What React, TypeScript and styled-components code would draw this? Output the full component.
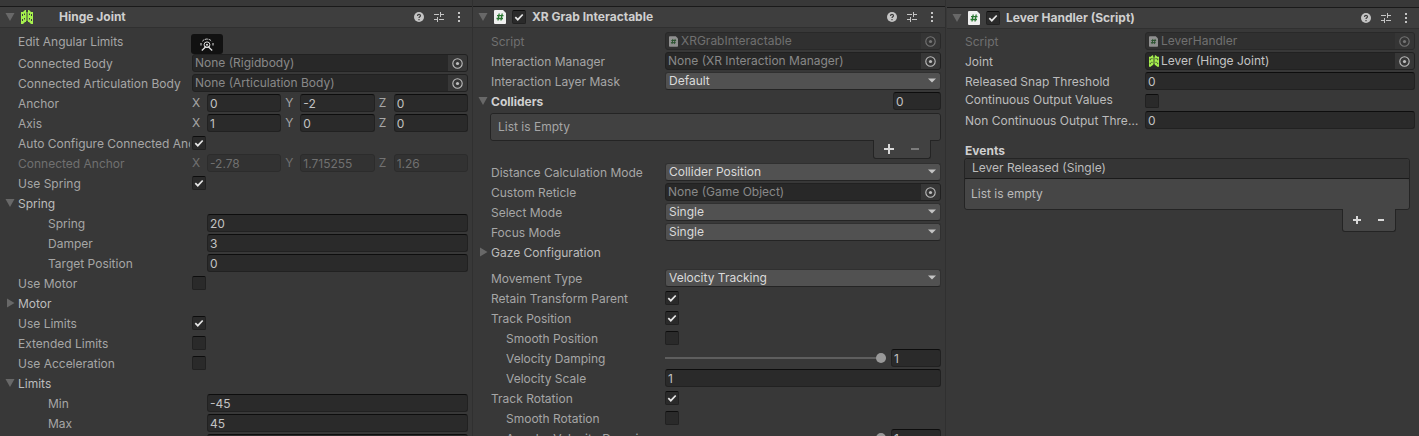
import React, { useId, useState } from "react";
import styled, { createGlobalStyle, css } from "styled-components";

const c = {
  window: "#383838",
  header: "#3e3e3e",
  line: "#1a1a1a",
  softLine: "#303030",
  field: "#2a2a2a",
  fieldEdge: "#212121",
  fieldTop: "#0d0d0d",
  object: "#282828",
  popup: "#515151",
  label: "#a6a6a6",
  strong: "#bcbcbc",
  title: "#cfcfcf",
  dim: "#707070",
  icon: "#c4c4c4",
};

const GlobalStyle = createGlobalStyle`
  *, *::before, *::after { box-sizing: border-box; }
  body {
    margin: 0;
    background: ${c.window};
    color: ${c.label};
    font: 12px/16px Inter, "Liberation Sans", sans-serif;
  }
  input, button, select { font: inherit; color: inherit; margin: 0; }
  svg { display: block; }
`;

const Editor = styled.main`
  display: grid;
  grid-template-columns: repeat(3, minmax(0, 1fr));
  height: 100vh;
  overflow: hidden;
`;

const Panel = styled.section<{ $last?: boolean }>`
  min-width: 0;
  padding-top: ${(p) => (p.$last ? 7 : 6)}px;
  padding-left: ${(p) => (p.$last ? 1 : 0)}px;
  border-right: ${(p) => (p.$last ? "0" : `1px solid ${c.softLine}`)};
`;

const Header = styled.header`
  display: flex;
  align-items: center;
  height: 22px;
  padding: 0 3px 0 5px;
  background: ${c.header};
  border-top: 1px solid ${c.line};
  border-bottom: 1px solid ${c.softLine};
`;

const HeaderIcon = styled.span`
  display: flex;
  width: 18px;
  margin-left: 6px;
`;

const ToggleSlot = styled.span`
  width: 20px;
`;

const Title = styled.h2`
  flex: 1;
  min-width: 0;
  margin: 0;
  font-size: 12px;
  font-weight: 700;
  color: ${c.title};
  white-space: nowrap;
`;

const IconButton = styled.button`
  display: grid;
  place-items: center;
  width: 20px;
  height: 20px;
  padding: 0;
  border: 0;
  background: none;
  color: ${c.icon};
`;

const FoldButton = styled.button`
  display: grid;
  place-items: center;
  flex: none;
  width: 10px;
  height: 16px;
  padding: 0;
  border: 0;
  background: none;
  color: #686868;
`;

const Body = styled.div<{ $labelWidth: number; $top: number }>`
  --label-width: ${(p) => p.$labelWidth}px;
  display: flex;
  flex-direction: column;
  gap: 2px;
  padding: ${(p) => p.$top}px 4px 0 18px;
`;

const Label = styled.label<{ $ellipsis?: boolean }>`
  margin-right: 2px;
  padding-top: 2px;
  overflow: hidden;
  white-space: nowrap;
  text-overflow: ${(p) => (p.$ellipsis ? "ellipsis" : "clip")};
`;

const Row = styled.div<{ $indent?: number; $shift?: number; $bright?: boolean; $dim?: boolean; $compact?: boolean; $space?: number }>`
  display: grid;
  grid-template-columns: calc(var(--label-width) - ${(p) => (p.$indent ?? 0) - (p.$shift ?? 0)}px) minmax(0, 1fr);
  align-items: center;
  height: ${(p) => (p.$compact ? 17 : 18)}px;
  padding-left: ${(p) => p.$indent ?? 0}px;
  margin-top: ${(p) => p.$space ?? 0}px;
  color: ${(p) => (p.$dim ? c.dim : p.$bright ? c.strong : c.label)};
  ${(p) =>
    p.$compact &&
    css`
      ${Label} {
        align-self: start;
        padding-top: 0;
      }
    `}
`;

const ToolRow = styled.div`
  display: grid;
  grid-template-columns: var(--label-width) auto;
  justify-content: start;
  align-items: start;
  margin-bottom: -2px;
`;

const ToolButton = styled.button`
  display: grid;
  place-items: center;
  width: 32px;
  height: 20px;
  margin-left: -1px;
  padding: 0;
  border: 0;
  border-radius: 3px;
  background: #111;
  color: #e0e0e0;
`;

const FoldRow = styled.div<{ $bold?: boolean }>`
  display: flex;
  align-items: center;
  height: 18px;
  margin-left: -13px;
  color: ${(p) => (p.$bold ? c.title : c.strong)};
  font-weight: ${(p) => (p.$bold ? 700 : 400)};
`;

const FoldName = styled.span`
  flex: 1;
  margin-left: 3px;
  padding-top: 2px;
`;

const well = css`
  height: 18px;
  border: 1px solid ${c.fieldEdge};
  border-radius: 3px;
`;

const TextInput = styled.input<{ $width?: number }>`
  ${well}
  width: ${(p) => (p.$width ? `${p.$width}px` : "100%")};
  min-width: 0;
  padding: 0 2px;
  border-top-color: ${c.fieldTop};
  background: ${c.field};
  color: #c2c2c2;
  font-weight: 400;
  &:disabled {
    background: #323232;
    border-color: #2c2c2c;
    color: ${c.dim};
  }
`;

const ObjectBox = styled.div<{ $off?: boolean }>`
  ${well}
  display: flex;
  align-items: center;
  overflow: hidden;
  background: ${(p) => (p.$off ? "#303030" : c.object)};
  border-color: ${(p) => (p.$off ? "#292929" : c.fieldEdge)};
  padding-left: 2px;
`;

const ObjectInput = styled.input<{ $set?: boolean }>`
  flex: 1;
  min-width: 0;
  height: 16px;
  padding: 0;
  border: 0;
  background: none;
  color: ${(p) => (p.$set ? "#c4c4c4" : "#888888")};
  &:disabled {
    color: ${c.dim};
  }
`;

const ObjectIcon = styled.span<{ $off?: boolean }>`
  width: 12px;
  flex: none;
  margin-left: 1px;
  opacity: ${(p) => (p.$off ? 0.5 : 1)};
`;

const PickButton = styled.button`
  display: grid;
  place-items: center;
  width: 19px;
  height: 16px;
  padding: 0 1px 0 0;
  border: 0;
  background: #373737;
  color: #bdbdbd;
  &:disabled {
    color: #747474;
    background: #353535;
  }
`;

const CheckBox = styled.span`
  display: grid;
  width: 14px;
  height: 14px;
  > * {
    grid-area: 1 / 1;
  }
  svg {
    pointer-events: none;
  }
`;

const CheckInput = styled.input`
  appearance: none;
  width: 14px;
  height: 14px;
  border: 1px solid ${c.fieldEdge};
  border-top-color: ${c.fieldTop};
  border-radius: 2px;
  background: ${c.field};
`;

const SelectBox = styled.div`
  position: relative;
  color: #c4c4c4;
  svg {
    position: absolute;
    right: 5px;
    top: 6px;
    pointer-events: none;
  }
`;

const Select = styled.select`
  ${well}
  display: block;
  appearance: none;
  width: 100%;
  padding: 0 18px 0 3px;
  border-color: ${c.softLine};
  border-bottom-color: #242424;
  background: ${c.popup};
  color: #dadada;
`;

const Vector = styled.div`
  display: grid;
  grid-template-columns: repeat(3, minmax(0, 1fr));
  gap: 4px;
`;

const Axis = styled.label`
  display: grid;
  grid-template-columns: 15px minmax(0, 1fr);
  align-items: center;
`;

const SliderBox = styled.div`
  display: grid;
  grid-template-columns: minmax(0, 1fr) 50px;
  gap: 5px;
  align-items: center;
`;

const Range = styled.input`
  appearance: none;
  width: 100%;
  height: 10px;
  background: none;
  &::-webkit-slider-runnable-track {
    height: 2px;
    background: #5e5e5e;
  }
  &::-webkit-slider-thumb {
    appearance: none;
    width: 10px;
    height: 10px;
    margin-top: -4px;
    border-radius: 50%;
    background: #999;
  }
`;

const List = styled.div<{ $events?: boolean }>`
  display: flex;
  flex-direction: column;
  align-items: flex-end;
  margin: ${(p) => (p.$events ? "-3px 5px 0 -1px" : "1px 0 2px -1px")};
`;

const ListBox = styled.div`
  align-self: stretch;
  border: 1px solid #242424;
  border-radius: 3px;
  background: #414141;
`;

const ListHead = styled.div`
  height: 20px;
  padding: 1px 7px;
  border-bottom: 1px solid ${c.line};
  border-radius: 3px 3px 0 0;
  background: #353535;
  color: ${c.strong};
`;

const ListText = styled.p<{ $events?: boolean }>`
  margin: 0;
  padding: ${(p) => (p.$events ? "7px 6px" : "5px 7px")};
  border-radius: 3px;
  background: ${(p) => (p.$events ? "#464646" : "#414141")};
  color: ${(p) => (p.$events ? "#bababa" : c.label)};
`;

const ListFoot = styled.div<{ $events?: boolean }>`
  display: flex;
  align-items: center;
  justify-content: space-evenly;
  width: ${(p) => (p.$events ? 54 : 58)}px;
  height: ${(p) => (p.$events ? 23 : 19)}px;
  margin: -1px ${(p) => (p.$events ? 14 : 10)}px 0 0;
  border: 1px solid #242424;
  border-top: 0;
  border-radius: 0 0 3px 3px;
  background: ${(p) => (p.$events ? "#464646" : "#414141")};
`;

const GroupTitle = styled.h3`
  margin: 12px 0 0;
  font-size: 12px;
  font-weight: 700;
  color: ${c.title};
`;

function Fold({ open = true, name }: { open?: boolean; name: string }) {
  return (
    <FoldButton type="button" aria-label={name} aria-expanded={open}>
      <svg width="10" height="10" viewBox="0 0 10 10" fill="currentColor">
        {open ? <path d="M.5 1h9L5 9z" /> : <path d="M2 .5v9L9.500 5z" />}
      </svg>
    </FoldButton>
  );
}

const HingeGlyph = ({ small }: { small?: boolean }) => (
  <svg width={small ? 10 : 12} height={small ? 12 : 14} viewBox="0 0 12 14" fill="#a6f04d">
    <path
      fillRule="evenodd"
      d="M0 2h2l2-2h1v12H4l-2 2H0zM1 4v2h1V4zM1 9v2h1V9zM3 3.500v1.500h1V3.500zM3 8v1.500h1V8zM5.500 2h1v9h-1zM7 0h1l2 2h2v12h-2l-2-2H7zM10 4v2h1V4zM10 9v2h1V9zM8 3.500v1.500h1V3.500zM8 8v1.500h1V8z"
    />
  </svg>
);

const ScriptGlyph = ({ small }: { small?: boolean }) => (
  <svg width={small ? 9 : 12} height={small ? 11 : 14} viewBox="0 0 12 14">
    <path d="M1 0h8l3 3v10a1 1 0 0 1-1 1H1a1 1 0 0 1-1-1V1a1 1 0 0 1 1-1z" fill="#f0f0f0" />
    <path d="M5.200 3.500L4 10.500M8.200 3.500L7 10.500M3 5.700h6.500M2.500 8.500H9" stroke="#27752f" strokeWidth="1.300" fill="none" />
  </svg>
);

const Caret = () => (
  <svg width="8" height="5" viewBox="0 0 8 5" fill="currentColor">
    <path d="M0 .5h8L4 4.500z" />
  </svg>
);

function Check({ id, checked, label }: { id?: string; checked?: boolean; label?: string }) {
  const [on, setOn] = useState(!!checked);
  return (
    <CheckBox>
      <CheckInput id={id} type="checkbox" aria-label={label} checked={on} onChange={(e) => setOn(e.target.checked)} />
      {on && (
        <svg width="14" height="14" viewBox="0 0 14 14" fill="none" stroke="#e6e6e6" strokeWidth="1.700">
          <path d="M3.300 7.200l2.500 2.500 4.900-5.200" />
        </svg>
      )}
    </CheckBox>
  );
}

function ComponentHeader({ title, script }: { title: string; script?: boolean }) {
  return (
    <Header>
      <Fold name={`Fold ${title}`} />
      <HeaderIcon>{script ? <ScriptGlyph /> : <HingeGlyph />}</HeaderIcon>
      <ToggleSlot>{script && <Check checked label={`Enable ${title}`} />}</ToggleSlot>
      <Title>{title}</Title>
      <IconButton type="button" aria-label="Help">
        <svg width="10" height="10" viewBox="0 0 10 10">
          <circle cx="5" cy="5" r="5" fill="currentColor" />
          <path d="M3.500 3.900c0-2 3-2 3-.1C6.500 4.800 5 4.800 5 6M5 7v1.200" stroke="#3e3e3e" strokeWidth="1.200" fill="none" />
        </svg>
      </IconButton>
      <IconButton type="button" aria-label="Presets">
        <svg width="10" height="10" viewBox="0 0 10 10" fill="currentColor">
          <path d="M0 2h5v1H0zM6 0h1v2h3v1H7v2H6zM0 7h3V5h1v5H3V8H0zM5 7h5v1H5z" />
        </svg>
      </IconButton>
      <IconButton type="button" aria-label="More">
        <svg width="2" height="10" viewBox="0 0 2 10" fill="currentColor">
          <path d="M0 0h2v2H0zM0 4h2v2H0zM0 8h2v2H0z" />
        </svg>
      </IconButton>
    </Header>
  );
}

type RowProps = {
  label: string;
  indent?: number;
  shift?: number;
  bright?: boolean;
  dim?: boolean;
  compact?: boolean;
  space?: number;
  ellipsis?: boolean;
};

function Property({ label, indent, shift, bright, dim, compact, space, ellipsis, children }: RowProps & { children: (id: string) => React.ReactNode }) {
  const id = useId();
  return (
    <Row $indent={indent} $shift={shift} $bright={bright} $dim={dim} $compact={compact} $space={space}>
      <Label htmlFor={id} $ellipsis={ellipsis}>{label}</Label>
      {children(id)}
    </Row>
  );
}

const TextRow = ({ value, ...row }: RowProps & { value: string }) => (
  <Property {...row}>{(id) => <TextInput id={id} defaultValue={value} />}</Property>
);

const CheckRow = ({ checked, ...row }: RowProps & { checked?: boolean }) => (
  <Property {...row}>{(id) => <Check id={id} checked={checked} />}</Property>
);

const SelectRow = ({ value, ...row }: RowProps & { value: string }) => (
  <Property {...row}>
    {(id) => (
      <SelectBox>
        <Select id={id} defaultValue={value}>
          <option>{value}</option>
        </Select>
        <Caret />
      </SelectBox>
    )}
  </Property>
);

const ObjectRow = ({ value, icon, set, ...row }: RowProps & { value: string; icon?: React.ReactNode; set?: boolean }) => (
  <Property {...row}>
    {(id) => (
      <ObjectBox $off={row.dim}>
        {icon && <ObjectIcon $off={row.dim}>{icon}</ObjectIcon>}
        <ObjectInput id={id} value={value} readOnly disabled={row.dim} $set={set} />
        <PickButton type="button" aria-label={`Pick ${row.label}`} disabled={row.dim}>
          <svg width="11" height="11" viewBox="0 0 11 11">
            <circle cx="5.500" cy="5.500" r="4.700" fill="none" stroke="currentColor" strokeWidth="1.100" />
            <circle cx="5.500" cy="5.500" r="1.600" fill="currentColor" />
          </svg>
        </PickButton>
      </ObjectBox>
    )}
  </Property>
);

const VectorRow = ({ values, ...row }: RowProps & { values: string[] }) => (
  <Row $dim={row.dim} role="group" aria-label={row.label}>
    <Label as="span">{row.label}</Label>
    <Vector>
      {["X", "Y", "Z"].map((axis, i) => (
        <Axis key={axis}>
          {axis}
          <TextInput defaultValue={values[i]} disabled={row.dim} />
        </Axis>
      ))}
    </Vector>
  </Row>
);

const SliderRow = (row: RowProps) => (
  <Property {...row}>
    {(id) => (
      <SliderBox>
        <Range id={id} type="range" min="0" max="1" step="0.01" defaultValue="1" />
        <TextInput defaultValue="1" aria-label={`${row.label} value`} />
      </SliderBox>
    )}
  </Property>
);

const Foldout = ({ name, open }: { name: string; open?: boolean }) => (
  <FoldRow>
    <Fold name={name} open={open} />
    <FoldName>{name}</FoldName>
  </FoldRow>
);

function ListFooter({ events }: { events?: boolean }) {
  return (
    <ListFoot $events={events}>
      <IconButton type="button" aria-label="Add">
        <svg width="10" height="10" viewBox="0 0 10 10" fill="#d8d8d8">
          <path d={events ? "M4 1h2v3h3v2H6v3H4V6H1V4h3z" : "M4 0h2v4h4v2H6v4H4V6H0V4h4z"} />
        </svg>
      </IconButton>
      <IconButton type="button" aria-label="Remove">
        <svg width="8" height="2" viewBox="0 0 8 2" fill={events ? "#d8d8d8" : "#7c7c7c"}>
          <path d={events ? "M1 0h6v2H1z" : "M0 0h8v2H0z"} />
        </svg>
      </IconButton>
    </ListFoot>
  );
}

export default function App() {
  return (
    <>
      <GlobalStyle />
      <Editor>
        <Panel>
          <ComponentHeader title="Hinge Joint" />
          <Body $labelWidth={174} $top={6}>
            <ToolRow>
              <span>Edit Angular Limits</span>
              <ToolButton type="button" aria-label="Edit Angular Limits">
                <svg width="14" height="13" viewBox="0 0 14 13" fill="none" stroke="currentColor">
                  <path d="M2.400 3.200A6 6 0 0 1 11.600 3.200" strokeDasharray="2.500 .8" />
                  <path d="M1 7.500V5M13 7.500V5" />
                  <circle cx="7" cy="6.800" r="2.900" />
                  <circle cx="7" cy="6.800" r="1" fill="currentColor" stroke="none" />
                  <path d="M6.300 8.200L1.800 12.500M7.700 8.200l4.500 4.300" strokeWidth="1.300" />
                </svg>
              </ToolButton>
            </ToolRow>
            <ObjectRow label="Connected Body" value="None (Rigidbody)" />
            <ObjectRow label="Connected Articulation Body" value="None (Articulation Body)" />
            <VectorRow label="Anchor" values={["0", "-2", "0"]} />
            <VectorRow label="Axis" values={["1", "0", "0"]} />
            <CheckRow label="Auto Configure Connected Anchor" checked />
            <VectorRow label="Connected Anchor" values={["-2.78", "1.715255", "1.26"]} dim />
            <CheckRow label="Use Spring" checked />
            <Foldout name="Spring" />
            <TextRow label="Spring" value="20" indent={30} shift={15} />
            <TextRow label="Damper" value="3" indent={30} shift={15} />
            <TextRow label="Target Position" value="0" indent={30} shift={15} />
            <CheckRow label="Use Motor" />
            <Foldout name="Motor" open={false} />
            <CheckRow label="Use Limits" checked />
            <CheckRow label="Extended Limits" />
            <CheckRow label="Use Acceleration" />
            <Foldout name="Limits" />
            <TextRow label="Min" value="-45" indent={30} shift={15} />
            <TextRow label="Max" value="45" indent={30} shift={15} />
            <TextRow label="Bounciness" value="0" indent={30} shift={15} />
          </Body>
        </Panel>

        <Panel>
          <ComponentHeader title="XR Grab Interactable" script />
          <Body $labelWidth={174} $top={4}>
            <ObjectRow label="Script" value="XRGrabInteractable" icon={<ScriptGlyph small />} dim />
            <ObjectRow label="Interaction Manager" value="None (XR Interaction Manager)" />
            <SelectRow label="Interaction Layer Mask" value="Default" />
            <FoldRow $bold>
              <Fold name="Colliders" />
              <FoldName>Colliders</FoldName>
              <TextInput $width={48} defaultValue="0" aria-label="Colliders size" />
            </FoldRow>
            <List>
              <ListBox>
                <ListText>List is Empty</ListText>
              </ListBox>
              <ListFooter />
            </List>
            <SelectRow label="Distance Calculation Mode" value="Collider Position" />
            <ObjectRow label="Custom Reticle" value="None (Game Object)" />
            <SelectRow label="Select Mode" value="Single" />
            <SelectRow label="Focus Mode" value="Single" />
            <Foldout name="Gaze Configuration" open={false} />
            <SelectRow label="Movement Type" value="Velocity Tracking" space={6} />
            <CheckRow label="Retain Transform Parent" checked />
            <CheckRow label="Track Position" checked />
            <CheckRow label="Smooth Position" indent={15} />
            <SliderRow label="Velocity Damping" indent={15} />
            <TextRow label="Velocity Scale" value="1" indent={15} />
            <CheckRow label="Track Rotation" checked />
            <CheckRow label="Smooth Rotation" indent={15} />
            <SliderRow label="Angular Velocity Damping" indent={15} />
          </Body>
        </Panel>

        <Panel $last>
          <ComponentHeader title="Lever Handler (Script)" script />
          <Body $labelWidth={180} $top={3}>
            <ObjectRow label="Script" value="LeverHandler" icon={<ScriptGlyph small />} dim />
            <ObjectRow label="Joint" value="Lever (Hinge Joint)" icon={<HingeGlyph small />} set bright />
            <TextRow label="Released Snap Threshold" value="0" bright />
            <CheckRow label="Continuous Output Values" bright compact />
            <TextRow label="Non Continuous Output Threshold" value="0" bright ellipsis />
            <GroupTitle>Events</GroupTitle>
            <List $events>
              <ListBox>
                <ListHead>Lever Released (Single)</ListHead>
                <ListText $events>List is empty</ListText>
              </ListBox>
              <ListFooter events />
            </List>
          </Body>
        </Panel>
      </Editor>
    </>
  );
}
